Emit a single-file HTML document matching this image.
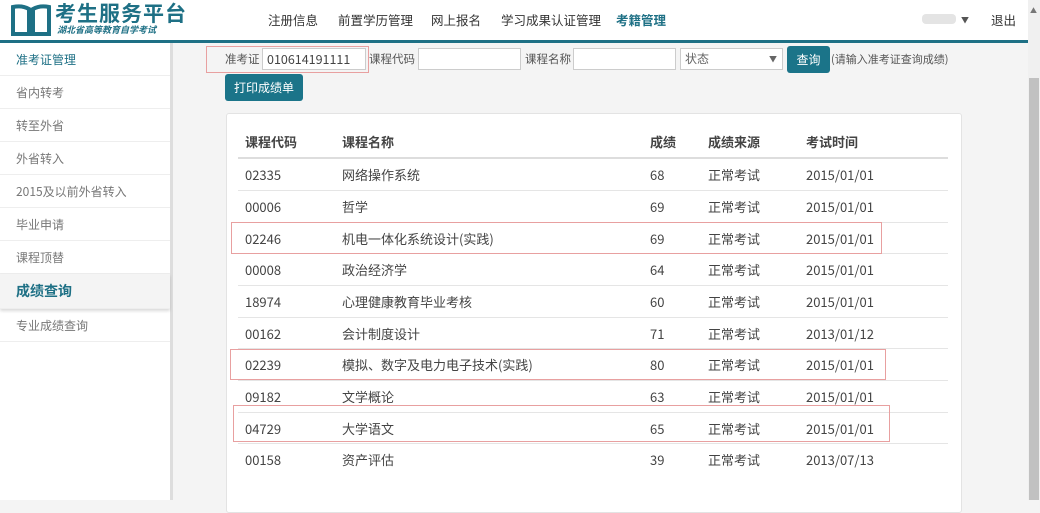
<!DOCTYPE html>
<html><head><meta charset="utf-8"><style>
*{margin:0;padding:0;box-sizing:border-box}
body{width:1040px;height:500px;overflow:hidden;background:#f4f4f4;font-family:"Noto Sans CJK SC","Liberation Sans",sans-serif;font-size:13px;line-height:18px;color:#555;position:relative}
.abs{position:absolute}
#hdr{left:0;top:0;width:1028px;height:40px;background:#fff}
#bar{left:0;top:40px;width:1028px;height:3px;background:#1e7085}
.nav{top:11px;font-size:12.5px;color:#333}
#side{left:0;top:43px;width:173px;height:457px;background:#fff;border-right:3px solid #ddd}
.si{position:absolute;left:0;width:170px;height:33px;line-height:33px;padding-left:16px;color:#777;border-bottom:1px solid #eee;font-size:12px}
#sb{left:1028px;top:0;width:12px;height:500px;background:#f0f0f0}
#thumb{left:1029px;top:78px;width:10px;height:422px;background:#c1c1c1}
.inp{background:#fff;border:1px solid #ccc;height:22px}
.lbl{top:50px;font-size:11.5px}
.btn{background:#1b7489;color:#fff;border-radius:3px;text-align:center;font-size:12px}
#panel{left:226px;top:113px;width:736px;height:400px;background:#fff;border:1px solid #e3e3e3;border-radius:3px}
.row{position:absolute;left:238px;width:710px;height:32px;border-top:1px solid #e5e5e5;font-size:13px;color:#444}
.row span{position:absolute;top:6px;line-height:20px}
.red{position:absolute;border:1px solid #e8a0a0}
</style></head><body>
<div class="abs" id="hdr"></div>
<svg class="abs" style="left:10px;top:3px" width="42" height="34" viewBox="0 0 42 34"><path d="M3 4 L3 31 L19 31 L19 6 Q12 2 3 4Z M39 4 L39 31 L23 31 L23 6 Q30 2 39 4Z" fill="none" stroke="#1e7085" stroke-width="4"/></svg>
<div class="abs" style="left:55px;top:0px;font-size:21px;line-height:26px;color:#1e7085;font-weight:bold;letter-spacing:1px">考生服务平台</div>
<div class="abs" style="left:57px;top:24px;font-size:9px;line-height:12px;color:#1e7085;font-style:italic;font-weight:bold">湖北省高等教育自学考试</div>
<div class="abs nav" style="left:268px">注册信息</div>
<div class="abs nav" style="left:338px">前置学历管理</div>
<div class="abs nav" style="left:431px">网上报名</div>
<div class="abs nav" style="left:501px">学习成果认证管理</div>
<div class="abs nav" style="left:616px;color:#1e7085;font-weight:bold">考籍管理</div>
<div class="abs" style="left:922px;top:14px;width:34px;height:10px;background:#e4e4e4;border-radius:4px"></div>
<div class="abs" style="left:961px;top:12px;font-size:8px;color:#555">▼</div>
<div class="abs nav" style="left:991px">退出</div>
<div class="abs" id="bar"></div>
<div class="abs" id="side">
<div class="si" style="top:0;color:#1e7085">准考证管理</div>
<div class="si" style="top:33px">省内转考</div>
<div class="si" style="top:66px">转至外省</div>
<div class="si" style="top:99px">外省转入</div>
<div class="si" style="top:132px">2015及以前外省转入</div>
<div class="si" style="top:165px">毕业申请</div>
<div class="si" style="top:198px">课程顶替</div>
<div class="si" style="top:231px;height:35px;line-height:35px;background:#f4f4f4;color:#1e7085;font-weight:bold;font-size:14px;box-shadow:0 2px 3px rgba(0,0,0,.15)">成绩查询</div>
<div class="si" style="top:266px">专业成绩查询</div>
</div>
<div class="red" style="left:206px;top:46px;width:163px;height:27px"></div>
<div class="abs lbl" style="left:225px">准考证</div>
<div class="abs inp" style="left:262px;top:48px;width:104px;color:#444;padding:1px 4px;font-size:12.5px">010614191111</div>
<div class="abs lbl" style="left:369px">课程代码</div>
<div class="abs inp" style="left:418px;top:48px;width:103px"></div>
<div class="abs lbl" style="left:525px">课程名称</div>
<div class="abs inp" style="left:573px;top:48px;width:103px"></div>
<div class="abs inp" style="left:680px;top:48px;width:103px;padding:1px 4px;color:#666;font-size:12px">状态<span style="position:absolute;right:5px;top:2px;font-size:8px">▼</span></div>
<div class="abs btn" style="left:787px;top:46px;width:43px;height:27px;line-height:27px">查询</div>
<div class="abs lbl" style="left:831px;font-size:11px">(请输入准考证查询成绩)</div>
<div class="abs btn" style="left:225px;top:74px;width:78px;height:27px;line-height:27px">打印成绩单</div>
<div class="abs" id="panel"></div>
<div class="row" style="top:126px;border-top:none;font-weight:bold;color:#444"><span style="left:7px">课程代码</span><span style="left:104px">课程名称</span><span style="left:412px">成绩</span><span style="left:470px">成绩来源</span><span style="left:568px">考试时间</span></div>
<div class="row" style="top:157px;border-top:2px solid #ddd"><span style="left:7px">02335</span><span style="left:104px">网络操作系统</span><span style="left:412px">68</span><span style="left:470px">正常考试</span><span style="left:568px">2015/01/01</span></div>
<div class="row" style="top:190px"><span style="left:7px">00006</span><span style="left:104px">哲学</span><span style="left:412px">69</span><span style="left:470px">正常考试</span><span style="left:568px">2015/01/01</span></div>
<div class="row" style="top:222px"><span style="left:7px">02246</span><span style="left:104px">机电一体化系统设计(实践)</span><span style="left:412px">69</span><span style="left:470px">正常考试</span><span style="left:568px">2015/01/01</span></div>
<div class="row" style="top:253px"><span style="left:7px">00008</span><span style="left:104px">政治经济学</span><span style="left:412px">64</span><span style="left:470px">正常考试</span><span style="left:568px">2015/01/01</span></div>
<div class="row" style="top:285px"><span style="left:7px">18974</span><span style="left:104px">心理健康教育毕业考核</span><span style="left:412px">60</span><span style="left:470px">正常考试</span><span style="left:568px">2015/01/01</span></div>
<div class="row" style="top:317px"><span style="left:7px">00162</span><span style="left:104px">会计制度设计</span><span style="left:412px">71</span><span style="left:470px">正常考试</span><span style="left:568px">2013/01/12</span></div>
<div class="row" style="top:348px"><span style="left:7px">02239</span><span style="left:104px">模拟、数字及电力电子技术(实践)</span><span style="left:412px">80</span><span style="left:470px">正常考试</span><span style="left:568px">2015/01/01</span></div>
<div class="row" style="top:380px"><span style="left:7px">09182</span><span style="left:104px">文学概论</span><span style="left:412px">63</span><span style="left:470px">正常考试</span><span style="left:568px">2015/01/01</span></div>
<div class="row" style="top:412px"><span style="left:7px">04729</span><span style="left:104px">大学语文</span><span style="left:412px">65</span><span style="left:470px">正常考试</span><span style="left:568px">2015/01/01</span></div>
<div class="row" style="top:443px"><span style="left:7px">00158</span><span style="left:104px">资产评估</span><span style="left:412px">39</span><span style="left:470px">正常考试</span><span style="left:568px">2013/07/13</span></div>
<div class="red" style="left:231px;top:222px;width:651px;height:32px"></div>
<div class="red" style="left:230px;top:349px;width:656px;height:31px"></div>
<div class="red" style="left:233px;top:405px;width:657px;height:37px"></div>
<div class="abs" id="sb"></div>
<div class="abs" id="thumb"></div>
<div class="abs" style="left:1030px;top:2px;font-size:7px;color:#777">▲</div>
</body></html>
